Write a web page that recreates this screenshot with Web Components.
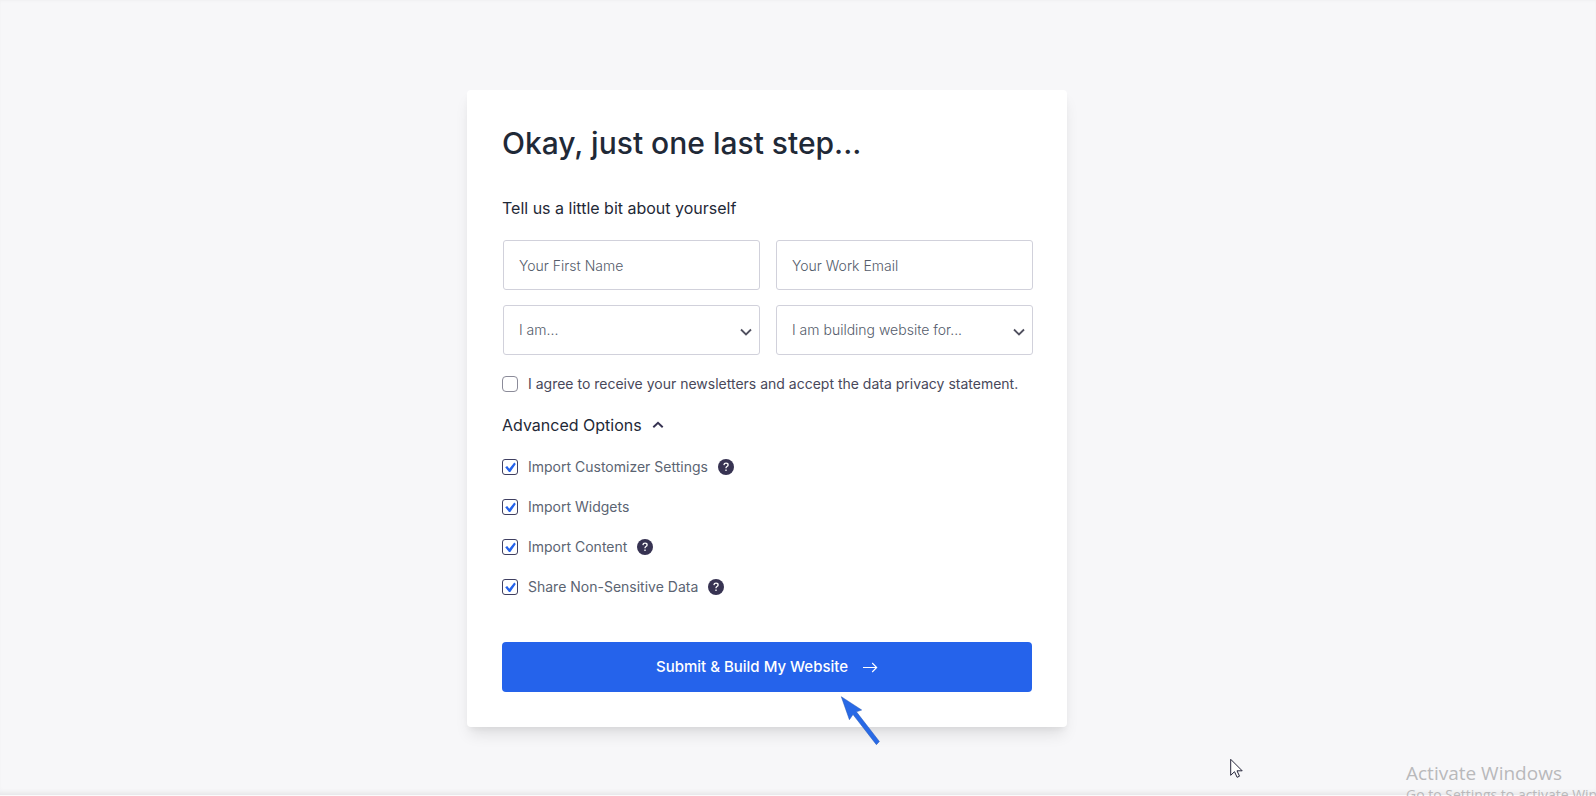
<!DOCTYPE html>
<html lang="en">
<head>
<meta charset="utf-8">
<meta name="viewport" content="width=device-width, initial-scale=1">
<title>One last step</title>
<style>
  html, body { margin: 0; height: 100%; }
  body { font-family: Inter, "Liberation Sans", sans-serif; background: #f7f7f9; color: #1f2937; overflow: hidden; }
</style>
</head>
<body>
<setup-page>
  <setup-card heading="Okay, just one last step...">
    <form-section label="Tell us a little bit about yourself">
      <text-field label="Your First Name" type="text"></text-field>
      <text-field label="Your Work Email" type="email"></text-field>
      <select-field label="I am..." options="Beginner,Intermediate,Expert"></select-field>
      <select-field label="I am building website for..." options="Myself,My company,A client"></select-field>
    </form-section>
    <check-option class="consent" tone="dark">I agree to receive your newsletters and accept the data privacy statement.</check-option>
    <option-group label="Advanced Options">
      <check-option checked help>Import Customizer Settings</check-option>
      <check-option checked>Import Widgets</check-option>
      <check-option checked help>Import Content</check-option>
      <check-option checked help>Share Non-Sensitive Data</check-option>
    </option-group>
    <submit-button>Submit &amp; Build My Website</submit-button>
  </setup-card>
  <pointer-arrow slot="overlay"></pointer-arrow>
  <mouse-cursor slot="overlay"></mouse-cursor>
  <system-watermark slot="overlay" heading="Activate Windows">Go to Settings to activate Windows.</system-watermark>
</setup-page>

<script>
  const define = (name, markup, setup) => {
    customElements.define(name, class extends HTMLElement {
      constructor() {
        super();
        const template = document.createElement('template');
        template.innerHTML = markup;
        this.attachShadow({ mode: 'open' }).append(template.content.cloneNode(true));
      }
      connectedCallback() {
        if (setup) setup(this, selector => this.shadowRoot.querySelector(selector));
      }
    });
  };

  define('setup-page', `
    <style>
      :host { display: block; position: relative; box-sizing: border-box; min-height: 100vh; padding: 90px 62px 68px 0;
        overflow: hidden; box-shadow: inset 0 3px 3px -2px #f0f0f2, inset 0 -1px 0 #fbfbfb, inset 0 -6px 5px -3px #e4e4e6; }
      main { display: flex; justify-content: center; }
    </style>
    <main><slot></slot></main>
    <slot name="overlay"></slot>`);

  define('setup-card', `
    <style>
      :host { display: block; box-sizing: border-box; width: 100%; max-width: 600px; padding: 35px; background: #fff;
        border-radius: 4px; box-shadow: 0 10px 15px -3px rgba(0,0,0,.1), 0 4px 6px -2px rgba(0,0,0,.05); }
      h1 { margin: 0 0 35px; font-size: 30px; line-height: 36px; font-weight: 500; }
      form { display: flex; flex-direction: column; }
    </style>
    <h1></h1>
    <form><slot></slot></form>`,
    (host, $) => { $('h1').textContent = host.getAttribute('heading'); });

  define('form-section', `
    <style>
      :host { display: block; margin-bottom: 19px; }
      h2 { margin: 0 0 20px; font-size: 16px; line-height: 24px; font-weight: 400; }
      div { display: grid; grid-template-columns: 1fr 1fr; gap: 15px 16px; margin: 0 -1px 0 1px; }
    </style>
    <h2></h2>
    <div><slot></slot></div>`,
    (host, $) => { $('h2').textContent = host.getAttribute('label'); });

  define('text-field', `
    <style>
      :host { display: block; }
      input { display: block; box-sizing: border-box; width: 100%; height: 50px; padding: 0 15px; font: 300 14px/20px Inter, "Liberation Sans", sans-serif;
        color: #1f2937; background: #fff; border: 1px solid #d1d1db; border-radius: 3px; outline-color: #2563eb; }
      input::placeholder { color: #545c6b; opacity: 1; }
    </style>
    <input>`,
    (host, $) => {
      const input = $('input');
      input.type = host.getAttribute('type');
      input.placeholder = host.getAttribute('label');
      input.setAttribute('aria-label', host.getAttribute('label'));
    });

  define('select-field', `
    <style>
      :host { display: grid; align-items: center; }
      select, svg { grid-area: 1 / 1; }
      select { appearance: none; box-sizing: border-box; width: 100%; height: 50px; padding: 0 36px 0 15px; font: 300 14px/20px Inter, "Liberation Sans", sans-serif;
        color: #545c6b; background: #fff; border: 1px solid #d1d1db; border-radius: 3px; outline-color: #2563eb; }
      svg { justify-self: end; margin: 3px 6px 0 0; pointer-events: none; }
    </style>
    <select></select>
    <svg width="16" height="16" viewBox="0 0 16 16" fill="none" stroke="#50505f" stroke-width="1.8" aria-hidden="true"><path d="M3 5.5l5 5 5-5"/></svg>`,
    (host, $) => {
      const select = $('select');
      select.setAttribute('aria-label', host.getAttribute('label'));
      select.append(new Option(host.getAttribute('label'), ''));
      host.getAttribute('options').split(',').forEach(text => select.append(new Option(text)));
    });

  define('help-tip', `
    <style>
      :host { display: block; }
      button { display: grid; place-items: center; width: 16px; height: 16px; padding: 0; border: 0; border-radius: 50%;
        background: #373352; cursor: help; }
    </style>
    <button type="button" aria-label="Help">
      <svg width="16" height="16" viewBox="0 0 16 16" fill="none" stroke="#fff" stroke-width="1.3"><path d="M5.9 6.1c.1-1.2.9-1.9 2.1-1.9s2.1.7 2.1 1.7c0 .8-.5 1.2-1.2 1.6-.6.4-.9.7-.9 1.4v.3"/><path d="M8 10.4v1.6"/></svg>
    </button>`);

  define('check-option', `
    <style>
      :host { display: flex; align-items: center; gap: 10px; height: 20px; color: #5b6472; }
      :host([tone="dark"]) { color: #48485a; }
      label { display: flex; align-items: center; gap: 10px; font-size: 14px; line-height: 20px; font-weight: 400; }
      input { appearance: none; display: block; box-sizing: border-box; width: 16px; height: 16px; margin: 0; border: 1px solid #8b8b99; border-radius: 4px; background: #fff; }
      input:checked { border-color: #3f3f60; border-radius: 3px; }
      .box { display: grid; }
      .box > * { grid-area: 1 / 1; }
      svg { pointer-events: none; visibility: hidden; }
      input:checked + svg { visibility: visible; }
    </style>
    <label>
      <span class="box"><input type="checkbox"><svg width="16" height="16" viewBox="0 0 16 16" fill="#2563eb" aria-hidden="true"><path d="M3.2 8.2l2-1.1 2.1 2.6 5-6.1 1.5 1.5L8.3 13H7z"/></svg></span>
      <span><slot></slot></span>
    </label>`,
    (host, $) => {
      $('input').checked = host.hasAttribute('checked');
      if (host.hasAttribute('help') && !$('help-tip')) host.shadowRoot.append(document.createElement('help-tip'));
    });

  define('option-group', `
    <style>
      :host { display: block; margin: 19px 0 45px; }
      button { display: flex; align-items: center; gap: 10px; padding: 0; border: 0; background: none; color: inherit;
        font: 400 16px/24px Inter, "Liberation Sans", sans-serif; cursor: pointer; }
      div { display: flex; flex-direction: column; gap: 20px; margin-top: 20px; }
      div[hidden] { display: none; }
    </style>
    <button type="button" aria-expanded="true"><span></span>
      <svg width="12" height="12" viewBox="0 0 12 12" fill="none" stroke="#373352" stroke-width="2" aria-hidden="true"><path d="M1.3 8.2L6 3.8l4.7 4.4"/></svg>
    </button>
    <div><slot></slot></div>`,
    (host, $) => {
      $('span').textContent = host.getAttribute('label');
      $('button').onclick = () => {
        const panel = $('div');
        panel.hidden = !panel.hidden;
        $('button').setAttribute('aria-expanded', String(!panel.hidden));
      };
    });

  define('submit-button', `
    <style>
      :host { display: block; }
      button { display: flex; align-items: center; justify-content: center; gap: 14px; width: 100%; height: 50px; padding: 0; border: 0;
        border-radius: 4px; background: #2563eb; color: #fff; font: 500 15px/20px Inter, "Liberation Sans", sans-serif; cursor: pointer; }
    </style>
    <button type="button"><span><slot></slot></span>
      <svg width="16" height="16" viewBox="0 0 16 16" fill="none" stroke="#fff" stroke-width="1.1" aria-hidden="true"><path d="M1 8.5h13.6M10.2 4l4.5 4.5-4.5 4.5"/></svg>
    </button>`);

  define('pointer-arrow', `
    <style>
      :host { position: absolute; left: calc(50% + 42px); top: 696px; pointer-events: none; }
      svg { display: block; }
    </style>
    <svg width="42" height="50" viewBox="0 0 42 50" fill="#2869e6" stroke="#2759b5" stroke-width=".5" aria-hidden="true"><path d="M1.3.7L21.7 14l-5.3 1.8 23 29.7-3 3.2L13 18.5l-3.6 5.2z"/></svg>`);

  define('mouse-cursor', `
    <style>
      :host { position: absolute; left: calc(50% + 432px); top: 758px; pointer-events: none; }
      svg { display: block; }
    </style>
    <svg width="14" height="21" viewBox="0 0 14 21" fill="#fff" stroke="#25253a" stroke-width="1" aria-hidden="true"><path d="M.7 1.3v16l3.8-3.6 2.6 5.6 2.4-1.1L7 12.8h5.2z"/></svg>`);

  define('system-watermark', `
    <style>
      :host { position: absolute; left: calc(100% - 190px); top: 760px; color: #b9b9bb; white-space: nowrap; pointer-events: none;
        font-family: "Open Sans", "Noto Sans", sans-serif; font-size: 14px; line-height: 18px; }
      strong { display: block; font-size: 19px; line-height: 26px; font-weight: 400; }
    </style>
    <strong></strong><slot></slot>`,
    (host, $) => { $('strong').textContent = host.getAttribute('heading'); });
</script>
</body>
</html>
